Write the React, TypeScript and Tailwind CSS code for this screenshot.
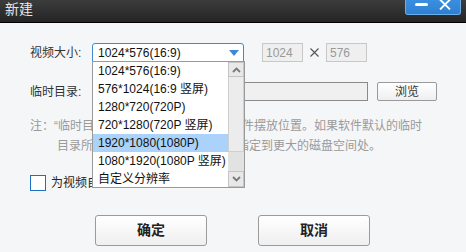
import React from "react";

const FONT = "font-['Liberation_Sans','Noto_Sans_CJK_SC',sans-serif]";

const options = [
  "1024*576(16:9)",
  "576*1024(16:9 竖屏)",
  "1280*720(720P)",
  "720*1280(720P 竖屏)",
  "1920*1080(1080P)",
  "1080*1920(1080P 竖屏)",
  "自定义分辨率",
];

function Chevron({ up }: { up?: boolean }) {
  return (
    <svg width="9" height="6" viewBox="0 0 9 6">
      <polyline
        points={up ? "1,5 4.5,1.5 8,5" : "1,1 4.5,4.5 8,1"}
        fill="none"
        stroke="#7a7a7a"
        strokeWidth="1.8"
      />
    </svg>
  );
}

function ResolutionSelect() {
  return (
    <div className="relative h-[19px] w-[152px]">
      <div className="flex h-full items-center justify-between rounded-t-[3px] border border-[#3b8ad9] bg-white pl-[5px] pr-[4px] text-[12px] text-[#111]">
        <span>1024*576(16:9)</span>
        <svg width="10" height="6" viewBox="0 0 10 6">
          <polygon points="0,0 10,0 5,6" fill="#3b8ad9" />
        </svg>
      </div>
      {/* open list */}
      <div className="absolute left-0 top-[18px] z-10 flex h-[127px] w-[153px] border border-[#9a9a9a] bg-white">
        <div className="flex flex-1 flex-col">
          {options.map((o, i) => (
            <div
              key={o}
              className={`flex h-[18px] items-center pl-[5px] text-[12px] text-[#111] ${
                i === 4 ? "bg-[#aad2fa]" : ""
              }`}
            >
              {o}
            </div>
          ))}
        </div>
        <div className="flex w-[16px] flex-col bg-[#e6e6e6]">
          <div className="flex h-[15px] items-center justify-center border border-[#c4c4c4] bg-[#e8e8e8]">
            <Chevron up />
          </div>
          <div className="h-[75px] border-x border-b border-[#cfcfcf] bg-[#ececec]" />
          <div className="flex-1 bg-[#e2e2e2]" />
          <div className="flex h-[16px] items-center justify-center border border-[#c4c4c4] bg-[#e8e8e8]">
            <Chevron />
          </div>
        </div>
      </div>
    </div>
  );
}

function Button({ label }: { label: string }) {
  return (
    <button className="flex h-[31px] w-[112px] items-center justify-center rounded-[3px] border border-[#9b9b9b] bg-gradient-to-b from-white to-[#efefef] text-[14px] font-bold text-[#222]">
      {label}
    </button>
  );
}

export default function App() {
  return (
    <div className={`h-[252px] w-[466px] overflow-hidden bg-[#f5f6f8] ${FONT}`}>
      <div className="relative flex h-[23px] items-center border-b border-black bg-gradient-to-b from-[#3c3c3c] to-[#252525] pl-[5px]">
        <span className="-mt-[4px] text-[14px] text-[#e6e6e6]">新建</span>
        <div className="absolute right-[5px] top-0 flex h-[15px] w-[56px] items-start justify-around rounded-b-[3px] border-x border-b border-[#6aaeea] bg-gradient-to-b from-[#3b8fe0] to-[#2f7fd0] px-[4px]">
          <div className="mt-[3px] h-[3px] w-[13px] rounded-full bg-white" />
          <svg width="12" height="11" viewBox="0 0 12 11" className="-mt-[1px]">
            <path d="M1 0.5 L11 10.5 M11 0.5 L1 10.5" stroke="white" strokeWidth="1.8" />
          </svg>
        </div>
      </div>

      <div className="flex flex-col pl-[30px] text-[12px] text-[#333]">
        <div className="mt-[20px] flex items-center">
          <span className="w-[62px]">视频大小:</span>
          <ResolutionSelect />
          <div className="ml-[18px] flex h-[19px] w-[41px] items-center border border-[#c8c8c8] bg-[#efefef] pl-[3px] text-[#999]">
            1024
          </div>
          <span className="flex w-[23px] justify-center">
            <svg width="9" height="9" viewBox="0 0 9 9">
              <path d="M0.5 0.5 L8.5 8.5 M8.5 0.5 L0.5 8.5" stroke="#555" strokeWidth="1.1" />
            </svg>
          </span>
          <div className="flex h-[19px] w-[41px] items-center border border-[#c8c8c8] bg-[#efefef] pl-[3px] text-[#999]">
            576
          </div>
        </div>

        <div className="mt-[20px] flex items-center">
          <span className="w-[62px]">临时目录:</span>
          <div className="h-[19px] w-[276px] border border-[#8a8a8a] bg-[#f0f0f0]" />
          <button className="ml-[9px] flex h-[19px] w-[60px] items-center justify-center rounded-[2px] border border-[#9a9a9a] bg-gradient-to-b from-white to-[#efefef] text-[12px] text-[#333]">
            浏览
          </button>
        </div>

        <div className="mt-[15px] text-[#9a9a9a] leading-[20px]">
          <div>注：“临时目录”是视频生成过程中临时文件摆放位置。如果软件默认的临时</div>
          <div className="pl-[27px]">目录所在的磁盘空间不足，请将其指定到更大的磁盘空间处。</div>
        </div>

        <label className="mt-[18px] flex items-center">
          <span className="h-[16px] w-[16px] border-[1.5px] border-[#1f6fc4] bg-white" />
          <span className="ml-[5px] text-[#222]">为视频自动添加片头片尾</span>
        </label>

        <div className="ml-[65px] mt-[23px] flex gap-[51px]">
          <Button label="确定" />
          <Button label="取消" />
        </div>
      </div>
    </div>
  );
}
